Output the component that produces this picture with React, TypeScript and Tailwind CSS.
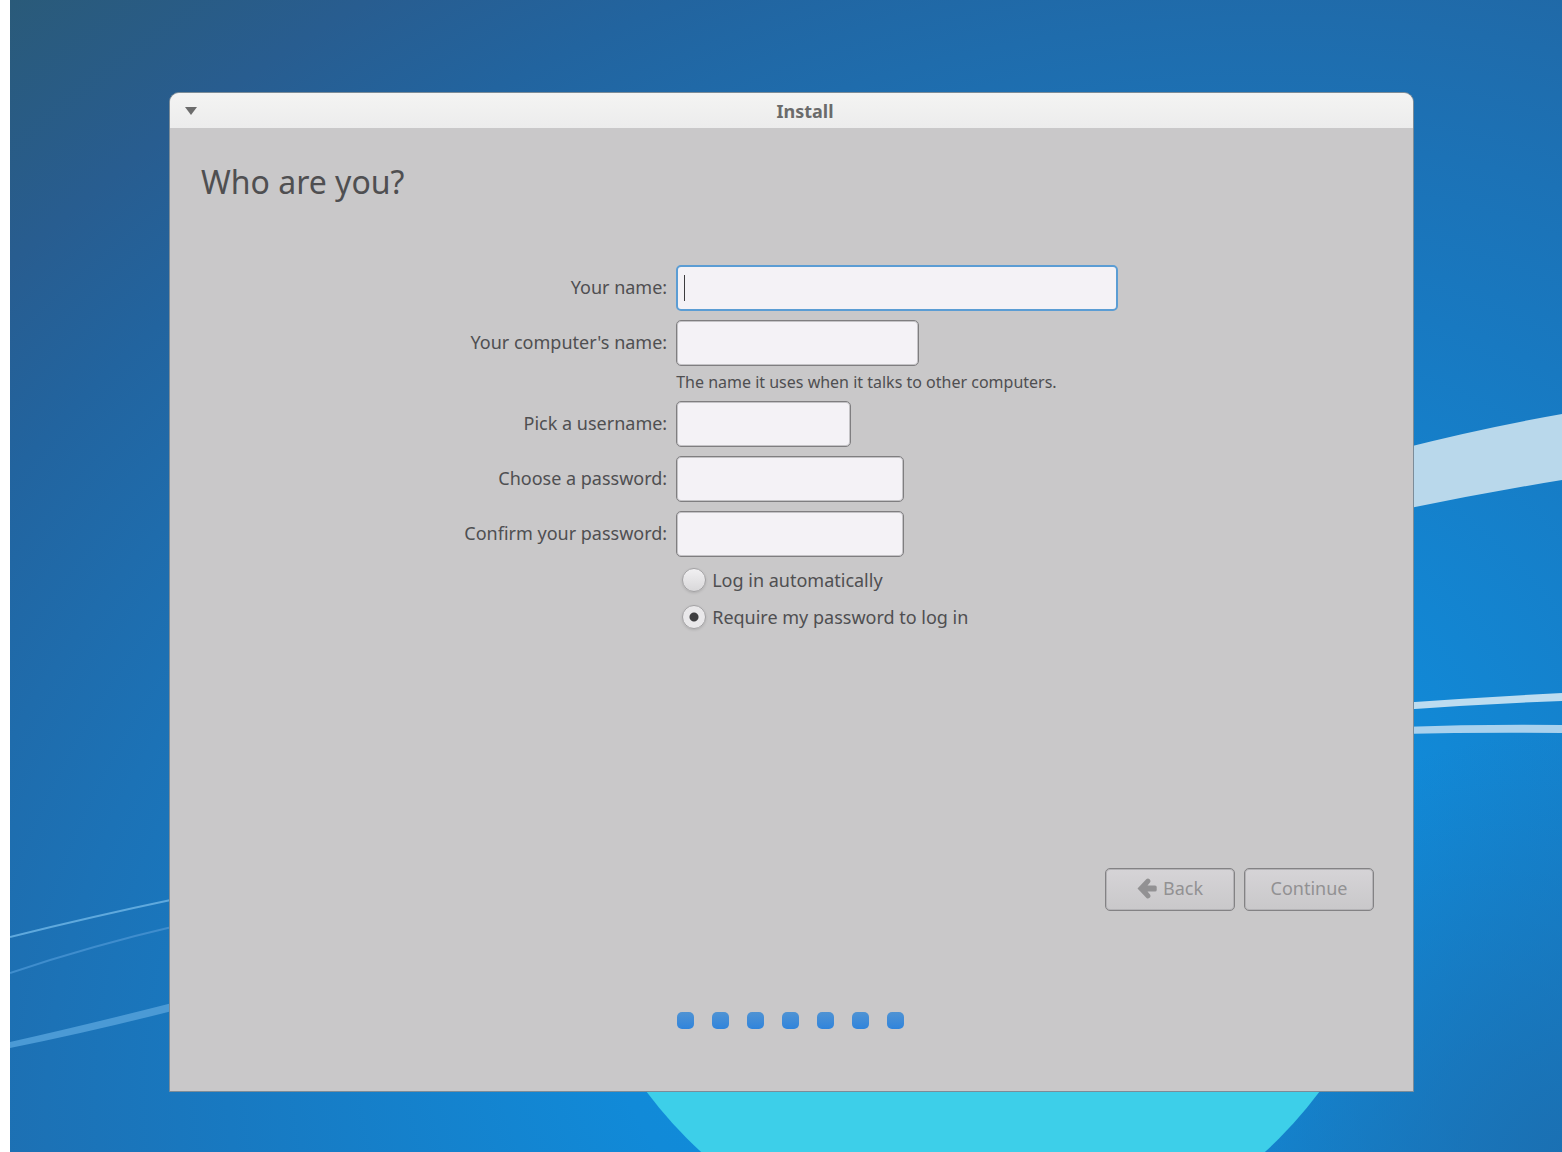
import React, { useState } from 'react';

type LoginMode = 'automatic' | 'password';

interface FieldProps {
  id: string;
  label: string;
  type?: string;
  width: string;
  hint?: string;
  active?: boolean;
}

const STEPS = 7;

const Wallpaper: React.FC = () => (
  <svg
    className="absolute inset-0 h-full w-full"
    viewBox="0 0 1552 1152"
    preserveAspectRatio="xMidYMid slice"
    aria-hidden="true"
  >
    <defs>
      <radialGradient
        id="glow"
        gradientUnits="userSpaceOnUse"
        cx="0"
        cy="0"
        r="1"
        gradientTransform="translate(1000 925) rotate(-25) scale(1900 1380)"
      >
        <stop offset="0" stopColor="#108ede" />
        <stop offset="0.22" stopColor="#118ad8" />
        <stop offset="0.43" stopColor="#1879c1" />
        <stop offset="0.53" stopColor="#1c72b6" />
        <stop offset="0.61" stopColor="#1f6cac" />
        <stop offset="0.71" stopColor="#22649f" />
        <stop offset="0.81" stopColor="#285d90" />
        <stop offset="0.96" stopColor="#2a5a78" />
      </radialGradient>
      <radialGradient id="shade" gradientUnits="userSpaceOnUse" cx="1552" cy="1152" r="420">
        <stop offset="0" stopColor="#1b6fb1" stopOpacity="0.9" />
        <stop offset="1" stopColor="#1b6fb1" stopOpacity="0" />
      </radialGradient>
    </defs>
    <rect width="1552" height="1152" fill="url(#glow)" />
    <rect width="1552" height="1152" fill="url(#shade)" />

    {/* swooshes on the left */}
    <path d="M0 937 Q80 917 170 898" fill="none" stroke="#5fa9dd" strokeWidth="2" />
    <path d="M0 973 Q80 946 170 925" fill="none" stroke="#3f8dcd" strokeWidth="2" />
    <path d="M0 1042 Q80 1024 170 1001 V1009 Q80 1032 0 1048 Z" fill="#4b9ad5" />

    {/* swooshes on the right */}
    <path d="M1390 449 Q1472 428 1552 414 V480 Q1472 493 1390 510 Z" fill="#b9d8eb" />
    <path d="M1390 703 Q1472 697 1552 693 V701 Q1472 704 1390 710 Z" fill="#bcdcf0" />
    <path d="M1390 727 Q1472 724 1552 725 V733 Q1472 732 1390 734 Z" fill="#a9d1ed" />

    <circle cx="973" cy="842" r="419" fill="#3dcfe9" />
  </svg>
);

const Field: React.FC<FieldProps> = ({ id, label, type = 'text', width, hint, active }) => (
  <>
    <label htmlFor={id} className="flex h-[46px] items-center justify-end pb-0.5 text-right">
      {label}
    </label>
    <div>
      <div className={`relative ${width}`}>
        <input
          id={id}
          type={type}
          autoComplete="off"
          aria-describedby={hint ? `${id}-hint` : undefined}
          className={`block h-[46px] w-full rounded-[5px] bg-[#f4f2f6] px-2 outline-none ${
            active ? 'border-2 border-[#5b9dd4]' : 'border border-[#7f7e80] shadow-[inset_0_0_0_1px_#c4c3c6]'
          }`}
        />
        {active && <span className="absolute top-2.5 left-2 h-[26px] w-px bg-[#3c3c3e]" />}
      </div>
      {hint && (
        <p id={`${id}-hint`} className="mt-2 h-[18px] text-[16px] leading-4">
          {hint}
        </p>
      )}
    </div>
  </>
);

interface RadioProps {
  label: string;
  checked: boolean;
  onSelect: () => void;
}

const Radio: React.FC<RadioProps> = ({ label, checked, onSelect }) => (
  <label className="col-start-2 ml-1.5 flex h-7 items-center gap-1.5">
    <input
      type="radio"
      name="login"
      checked={checked}
      onChange={onSelect}
      className="h-6 w-6 shrink-0 appearance-none rounded-full border border-[#a3a2a4] bg-linear-to-b from-[#f1f0f2] to-[#d9d8da] shadow-sm checked:bg-[radial-gradient(circle,#3e3e40_4px,#e9e8ea_5px)]"
    />
    {label}
  </label>
);

const App: React.FC = () => {
  const [login, setLogin] = useState<LoginMode>('password');

  const buttonClass =
    'flex h-[43px] w-[130px] items-center justify-center gap-1.5 rounded-[5px] border border-[#838284] bg-linear-to-b from-[#d6d4d7] to-[#c9c8ca] pb-0.5 text-[#929193] shadow-[inset_0_0_0_1px_#b4b3b6]';

  return (
    <div className="min-h-screen bg-white pl-2.5 font-['Noto_Sans',sans-serif] text-[18px] text-[#4f4f51]">
      <div className="relative flex min-h-screen overflow-hidden bg-[#1d70b2] pt-[92px] pr-[148px] pb-[60px] pl-[159px]">
        <Wallpaper />

        <main className="relative flex flex-1 flex-col overflow-hidden rounded-t-[10px] border border-[#7c8c98] bg-[#c9c8c9]">
          <header className="flex h-[35px] shrink-0 items-center bg-linear-to-b from-[#f4f4f3] to-[#ececec]">
            <button type="button" aria-label="Window menu" className="flex h-full w-[27px] items-center justify-end">
              <svg width="12" height="8" viewBox="0 0 12 8" fill="#6c6c6c">
                <path d="M0 0 H12 L6 8 Z" />
              </svg>
            </button>
            <h1 className="flex-1 text-center leading-6 font-bold text-[#6b6b6b]">Install</h1>
          </header>

          <h2 className="px-[31px] pt-8 text-[32px] leading-[44px]">Who are you?</h2>

          <form className="mt-[61px] grid grid-cols-[40%_1fr] gap-x-[9px] gap-y-[9px]">
            <Field id="name" label="Your name:" width="w-[442px]" active />
            <Field
              id="host"
              label="Your computer's name:"
              width="w-[243px]"
              hint="The name it uses when it talks to other computers."
            />
            <Field id="user" label="Pick a username:" width="w-[175px]" />
            <Field id="password" label="Choose a password:" type="password" width="w-[228px]" />
            <Field id="confirm" label="Confirm your password:" type="password" width="w-[228px]" />
            <Radio
              label="Log in automatically"
              checked={login === 'automatic'}
              onSelect={() => setLogin('automatic')}
            />
            <Radio
              label="Require my password to log in"
              checked={login === 'password'}
              onSelect={() => setLogin('password')}
            />
          </form>

          <footer className="mt-auto pb-[62px]">
            <div className="flex justify-end gap-[9px] pr-[39px]">
              <button type="button" className={buttonClass}>
                <svg width="20" height="21" viewBox="0 0 20 21" fill="#929193">
                  <path d="M0.5 10.5 L9.5 1 Q11 -0.2 12.6 1.2 Q14.2 2.8 13 4.6 L10.5 7.5 H18 Q19.7 7.5 19.7 9 V12 Q19.7 13.5 18 13.5 H10.5 L13 16.4 Q14.2 18.2 12.6 19.8 Q11 21.2 9.5 20 Z" />
                </svg>
                Back
              </button>
              <button type="button" className={buttonClass}>
                Continue
              </button>
            </div>
            <div className="mt-[101px] flex justify-center gap-[18px] pr-0.5">
              {Array.from({ length: STEPS }, (_, i) => (
                <span key={i} className="h-[17px] w-[17px] rounded-[5px] bg-linear-to-b from-[#4f93d3] to-[#2f84dc]" />
              ))}
            </div>
          </footer>
        </main>
      </div>
    </div>
  );
};

export default App;
